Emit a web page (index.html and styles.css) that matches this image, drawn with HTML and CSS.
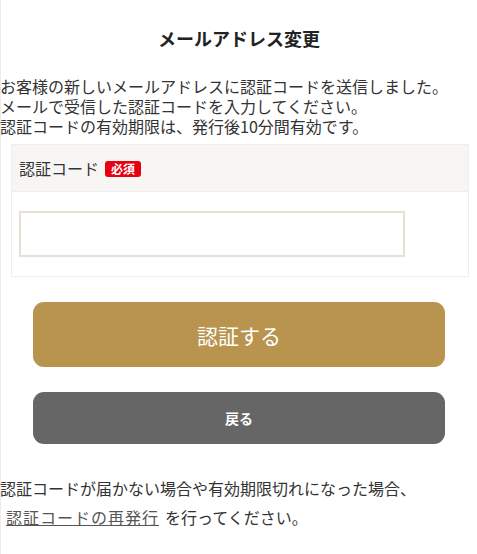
FILE: index.html
```html
<!DOCTYPE html>
<html lang="ja">
<head>
  <meta charset="UTF-8">
  <meta name="viewport" content="width=device-width, initial-scale=1.0">
  <title>メールアドレス変更</title>
  <link rel="stylesheet" href="styles.css">
</head>
<body>
  <div id="page">
    <h1 class="title">メールアドレス変更</h1>

    <p class="lead">
      お客様の新しいメールアドレスに認証コードを送信しました。<br>
      メールで受信した認証コードを入力してください。<br>
      認証コードの有効期限は、発行後10分間有効です。
    </p>

    <div class="form-box">
      <div class="form-head">
        <span class="label">認証コード</span>
        <span class="required">必須</span>
      </div>
      <div class="form-body">
        <input type="text" class="code-input" id="code">
      </div>
    </div>

    <div class="actions">
      <button class="btn btn-submit" id="submit">認証する</button>
      <button class="btn btn-back" id="back">戻る</button>
    </div>

    <p class="note">
      認証コードが届かない場合や有効期限切れになった場合、<br>
      <a href="#" class="reissue">認証コードの再発行</a>を行ってください。
    </p>
  </div>
</body>
</html>
```

FILE: styles.css
```css
body {
  margin: 0;
  background-color: #fff;
  color: #333;
  font-family: "Noto Sans CJK JP", "Noto Sans", sans-serif;
}

#page {
  border-left: 1px solid #ececec;
  min-height: 554px;
  box-sizing: border-box;
}

.title {
  margin: 0;
  padding-top: 26px;
  font-size: 18px;
  line-height: 24px;
  font-weight: bold;
  color: #222;
  text-align: center;
}

.lead {
  margin: 26px 0 0 -1px;
  font-size: 16px;
  line-height: 20px;
}

.form-box {
  margin: 8px 8px 0 10px;
  border: 1px solid #eeeeee;
}

.form-head {
  display: flex;
  align-items: center;
  gap: 6px;
  height: 46px;
  padding: 0 7px;
  background-color: #f7f6f4;
  border-bottom: 1px solid #eeeeee;
}

.label {
  font-size: 16px;
}

.required {
  display: inline-block;
  padding: 0 6px;
  height: 16px;
  line-height: 16px;
  border-radius: 3px;
  background-color: #e60012;
  color: #fff;
  font-size: 12px;
  font-weight: bold;
  margin-top: 1px;
}

.form-body {
  padding: 19px 7px 19px 7px;
}

.code-input {
  display: block;
  width: 386px;
  height: 46px;
  box-sizing: border-box;
  border: 2px solid #e6e0d4;
  outline: none;
  font-size: 16px;
  padding: 0 8px;
}

.actions {
  display: flex;
  flex-direction: column;
  align-items: center;
  gap: 25px;
  margin-top: 25px;
}

.btn {
  width: 412px;
  border: none;
  border-radius: 11px;
  color: #fff;
  font-family: "Noto Sans CJK JP", sans-serif;
  cursor: pointer;
}

.btn-submit {
  height: 65px;
  background-color: #b8944f;
  font-size: 21px;
}

.btn-back {
  height: 52px;
  background-color: #666666;
  font-size: 14px;
  font-weight: bold;
}

.note {
  margin: 30px 0 0 -1px;
  font-size: 16px;
  line-height: 29px;
}

.reissue {
  display: inline-block;
  margin: 0 6px;
  letter-spacing: 1px;
  color: #555;
  text-decoration: underline;
}
```
